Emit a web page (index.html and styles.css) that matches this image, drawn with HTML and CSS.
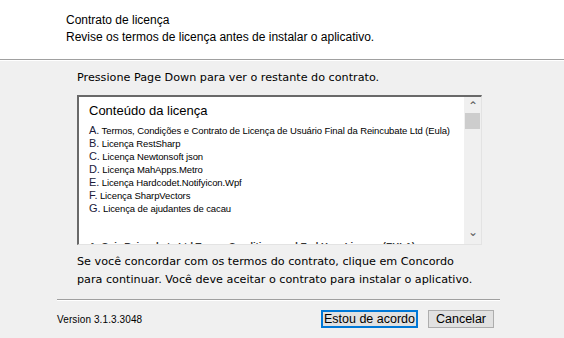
FILE: index.html
```html
<!DOCTYPE html>
<html lang="pt-BR">
<head>
    <meta charset="UTF-8">
    <title>Contrato de licença</title>
    <link rel="stylesheet" href="styles.css">
</head>
<body>
<div class="window">
    <!-- cabeçalho -->
    <div class="header">
        <div class="title">Contrato de licença</div>
        <div class="subtitle">Revise os termos de licença antes de instalar o aplicativo.</div>
    </div>

    <div class="main">
        <div class="prompt">Pressione Page Down para ver o restante do contrato.</div>

        <div class="license-box">
            <div class="license-text">
                <div class="license-title">Conteúdo da licença</div>
                <ul class="toc">
                    <li><b>A.</b> Termos, Condições e Contrato de Licença de Usuário Final da Reincubate Ltd (Eula)</li>
                    <li><b>B.</b> Licença RestSharp</li>
                    <li><b>C.</b> Licença Newtonsoft json</li>
                    <li><b>D.</b> Licença MahApps.Metro</li>
                    <li><b>E.</b> Licença Hardcodet.Notifyicon.Wpf</li>
                    <li><b>F.</b> Licença SharpVectors</li>
                    <li><b>G.</b> Licença de ajudantes de cacau</li>
                </ul>
                <div class="section-head">A. Quiz Reincubate Ltd Terms, Conditions and End User Licence (EULA)</div>
            </div>
            <div class="scrollbar">
                <span class="arrow">&#8963;</span>
                <span class="thumb"></span>
                <span class="track"></span>
                <span class="arrow down">&#8964;</span>
            </div>
        </div>

        <div class="agree">Se você concordar com os termos do contrato, clique em Concordo<br>para continuar. Você deve aceitar o contrato para instalar o aplicativo.</div>
    </div>

    <div class="divider"></div>

    <div class="footer">
        <span class="version">Version 3.1.3.3048</span>
        <div class="buttons">
            <button class="btn primary">Estou de acordo</button>
            <button class="btn">Cancelar</button>
        </div>
    </div>
</div>
</body>
</html>
```

FILE: styles.css
```css
/* instalador estilo Windows */
:root {
    --bg-grey: #f0f0f0;
    --line-grey: #a0a0a0;
    --text: #000000;
    --focus-blue: #0078d7;
}

body {
    margin: 0;
    padding: 0;
    background: var(--bg-grey);
    font-family: 'Liberation Sans', Arial, sans-serif;
    color: var(--text);
}

.window {
    width: 564px;
    height: 338px;
    overflow: hidden;
}

.header {
    background: #ffffff;
    height: 60px;
    padding: 12px 0 0 66px;
    box-sizing: border-box;
    border-bottom: 1px solid var(--line-grey);
    box-shadow: 0 1px 0 #ffffff;
    font-size: 12px;
    line-height: 17px;
}

.main {
    padding: 9px 0 0 77px;
    font-family: 'DejaVu Sans', Verdana, sans-serif;
    font-size: 11.2px;
}

.prompt {
    line-height: 17px;
    margin-bottom: 9px;
}

.license-box {
    width: 405px;
    height: 150px;
    box-sizing: border-box;
    background: #ffffff;
    border-top: 2px solid #696969;
    border-left: 2px solid #696969;
    border-right: 1px solid #e3e3e3;
    border-bottom: 1px solid #e3e3e3;
    display: flex;
    overflow: hidden;
    font-family: 'Liberation Sans', Arial, sans-serif;
}

.license-text {
    flex: 1;
    min-width: 0;
    padding: 5px 0 0 10px;
    overflow: hidden;
}

.license-title {
    font-size: 13px;
    line-height: 18px;
    margin-bottom: 4px;
}

.toc {
    list-style: none;
    margin: 0;
    padding: 0;
    font-size: 9.5px;
    line-height: 13px;
    letter-spacing: -0.1px;
    white-space: nowrap;
}

.toc b {
    font-weight: normal;
    font-size: 11px;
    color: #1a1a3a;
}

.section-head {
    margin-top: 24px;
    font-size: 9.5px;
    line-height: 13px;
    font-weight: bold;
    color: #333333;
    white-space: nowrap;
}

.scrollbar {
    width: 17px;
    flex-shrink: 0;
    background: #f0f0f0;
    display: flex;
    flex-direction: column;
    align-items: center;
}

.arrow {
    height: 16px;
    font-size: 12px;
    line-height: 19px;
    color: #606060;
}

.arrow.down {
    line-height: 9px;
}

.thumb {
    width: 15px;
    height: 16px;
    background: #cdcdcd;
}

.track {
    flex: 1;
}

.agree {
    margin-top: 8px;
    line-height: 18px;
}

.divider {
    margin: 10px 0 0 57px;
    width: 443px;
    border-top: 1px solid var(--line-grey);
    border-bottom: 1px solid #ffffff;
}

.footer {
    display: flex;
    align-items: center;
    justify-content: space-between;
    width: 437px;
    margin: 9px 0 0 57px;
}

.version {
    font-size: 10px;
    letter-spacing: 0.1px;
}

.buttons {
    display: flex;
    gap: 10px;
}

.btn {
    height: 18px;
    padding: 0;
    background: #e1e1e1;
    border: 1px solid #adadad;
    font-family: 'Liberation Sans', Arial, sans-serif;
    font-size: 12.5px;
    line-height: 16px;
    color: var(--text);
    width: 66px;
}

.btn.primary {
    width: 97px;
    border: 1px solid var(--focus-blue);
    box-shadow: inset 0 0 0 1px var(--focus-blue);
}
```
